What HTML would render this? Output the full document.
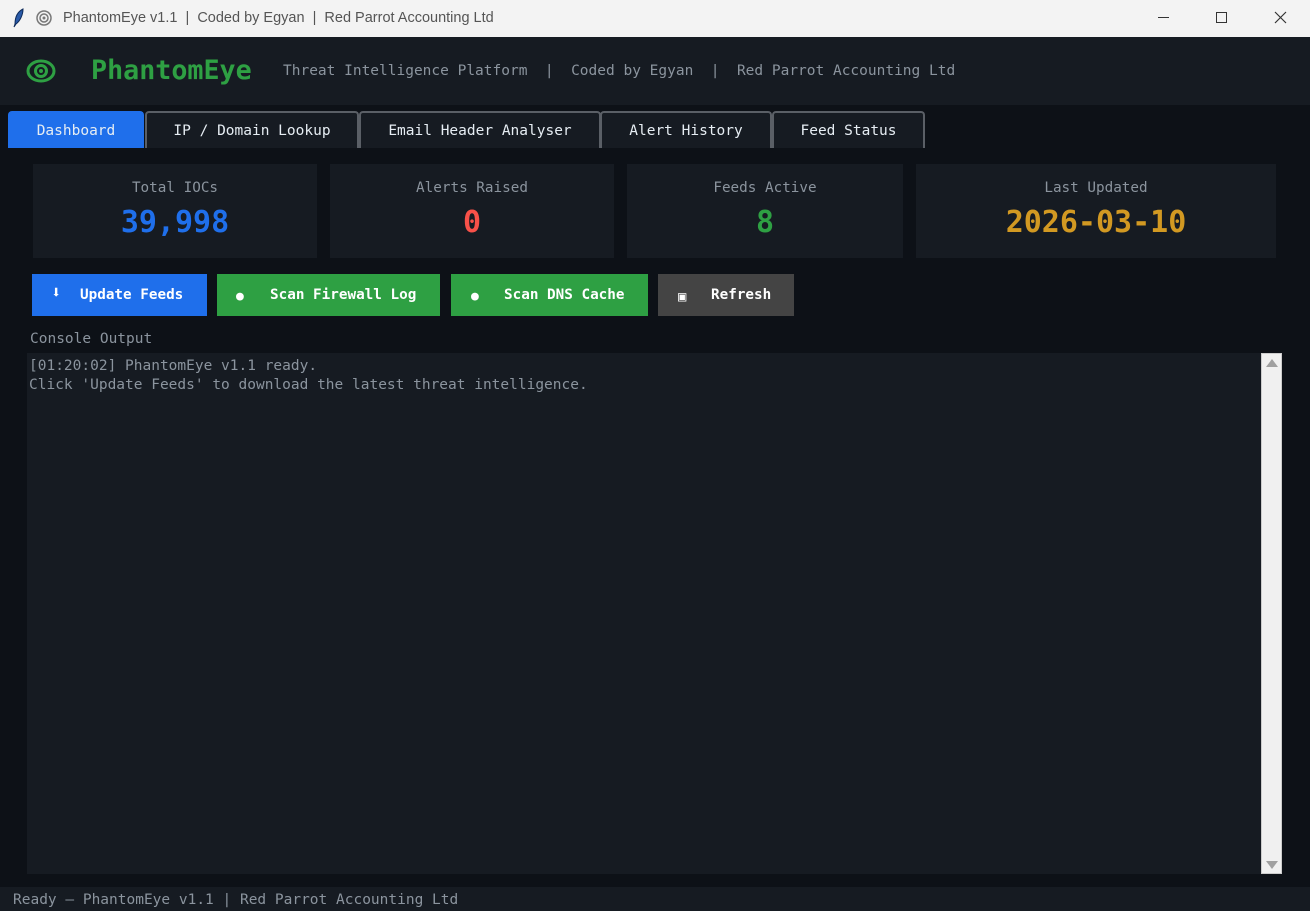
<!DOCTYPE html>
<html><head><meta charset="utf-8"><style>
*{margin:0;padding:0;box-sizing:border-box}
body{width:1310px;height:911px;background:#0d1117;position:relative;overflow:hidden;font-family:"DejaVu Sans Mono","Liberation Mono",monospace;font-size:14.5px;color:#c9d1d9}
.a{position:absolute}
.title{left:0;top:0;width:1310px;height:37px;background:#f3f3f3;font-family:"Liberation Sans",sans-serif;font-size:14.5px;color:#555}
.hdr{left:0;top:37px;width:1310px;height:68px;background:#161b22}
.tab{top:111px;height:37px;background:#161b22;border:2px solid #5a5f66;border-bottom:none;border-radius:4px 4px 0 0;color:#e6edf3;text-align:center;line-height:37px}
.card{top:164px;height:94px;background:#161b22;text-align:center}
.card .l{margin-top:16px;color:#8b949e;font-size:14.3px}
.card .v{margin-top:9px;font-size:30px;font-weight:bold}
.btn{top:274px;height:42px;color:#fff;font-weight:bold;line-height:42px;font-size:14.3px}
.btn i{position:absolute;font-style:normal;top:0}
.btn b{position:absolute;top:0}
</style></head><body>
<div class="a title">
 <svg class="a" style="left:12px;top:8px" width="14" height="20" viewBox="0 0 14 20"><path d="M11 1 C5 4 3 10 3 16 L2 19 L4 16 C8 13 11 7 11 1Z" fill="#2a5aa8" stroke="#0d2a5a" stroke-width="1"/></svg>
 <svg class="a" style="left:36px;top:10px" width="16" height="16" viewBox="0 0 16 16"><circle cx="8" cy="8" r="7" fill="none" stroke="#777" stroke-width="1.5"/><circle cx="8" cy="8" r="4" fill="none" stroke="#777" stroke-width="1.5"/><circle cx="8" cy="8" r="1.5" fill="#777"/></svg>
 <div class="a" style="left:63px;top:10px">PhantomEye v1.1 &nbsp;|&nbsp; Coded by Egyan &nbsp;|&nbsp; Red Parrot Accounting Ltd</div>
 <div class="a" style="left:1158px;top:17px;width:11px;height:1px;background:#333"></div>
 <div class="a" style="left:1216px;top:12px;width:11px;height:11px;border:1px solid #333"></div>
 <svg class="a" style="left:1274px;top:11px" width="13" height="13"><path d="M1 1L12 12M12 1L1 12" stroke="#333" stroke-width="1.2"/></svg>
</div>
<div class="a hdr">
 <svg class="a" style="left:26px;top:22px" width="30" height="24" viewBox="0 0 30 24"><ellipse cx="15" cy="12" rx="13" ry="10" fill="none" stroke="#2ea043" stroke-width="3"/><circle cx="15" cy="12" r="5.5" fill="none" stroke="#2ea043" stroke-width="3"/><circle cx="15" cy="12" r="2" fill="#2ea043"/></svg>
 <div class="a" style="left:91px;top:18px;font-size:26.7px;font-weight:bold;color:#2ea043">PhantomEye</div>
 <div class="a" style="left:283px;top:26px;color:#8b949e">Threat Intelligence Platform &nbsp;| &nbsp;Coded by Egyan &nbsp;| &nbsp;Red Parrot Accounting Ltd</div>
</div>
<div class="a tab" style="left:8px;width:136px;background:#1f6feb;border-color:#1f6feb">Dashboard</div>
<div class="a tab" style="left:145px;width:214px">IP / Domain Lookup</div>
<div class="a tab" style="left:359px;width:242px">Email Header Analyser</div>
<div class="a tab" style="left:600px;width:172px">Alert History</div>
<div class="a tab" style="left:772px;width:153px">Feed Status</div>
<div class="a card" style="left:33px;width:284px"><div class="l">Total IOCs</div><div class="v" style="color:#1f6feb">39,998</div></div>
<div class="a card" style="left:330px;width:284px"><div class="l">Alerts Raised</div><div class="v" style="color:#f85149">0</div></div>
<div class="a card" style="left:627px;width:276px"><div class="l">Feeds Active</div><div class="v" style="color:#2ea043">8</div></div>
<div class="a card" style="left:916px;width:360px"><div class="l">Last Updated</div><div class="v" style="color:#d29922">2026-03-10</div></div>
<div class="a btn" style="left:32px;width:175px;background:#1f6feb"><i style="left:19px;font-size:17px;top:-2px">⬇</i><b style="left:48px">Update Feeds</b></div>
<div class="a btn" style="left:217px;width:223px;background:#2ea043"><i style="left:19px;font-size:13px;top:2px">●</i><b style="left:53px">Scan Firewall Log</b></div>
<div class="a btn" style="left:451px;width:197px;background:#2ea043"><i style="left:20px;font-size:13px;top:2px">●</i><b style="left:53px">Scan DNS Cache</b></div>
<div class="a btn" style="left:658px;width:136px;background:#444"><i style="left:20px;font-size:14px;top:2px">▣</i><b style="left:53px">Refresh</b></div>
<div class="a" style="left:30px;top:331px;color:#8b949e">Console Output</div>
<div class="a" style="left:27px;top:353px;width:1234px;height:521px;background:#161b22;color:#8b949e;font-size:14.5px;line-height:19px;padding:4px 2px">[01:20:02] PhantomEye v1.1 ready.<br>Click 'Update Feeds' to download the latest threat intelligence.</div>
<div class="a" style="left:1261px;top:353px;width:21px;height:521px;background:#f0f0f0;border:1px solid #ccc"></div>
<div class="a" style="left:1266px;top:359px;width:0;height:0;border-left:6px solid transparent;border-right:6px solid transparent;border-bottom:8px solid #a0a0a0"></div>
<div class="a" style="left:1266px;top:861px;width:0;height:0;border-left:6px solid transparent;border-right:6px solid transparent;border-top:8px solid #a0a0a0"></div>
<div class="a" style="left:0;top:887px;width:1310px;height:24px;background:#161b22;color:#8b949e;padding:5px 13px">Ready — PhantomEye v1.1 | Red Parrot Accounting Ltd</div>
</body></html>
